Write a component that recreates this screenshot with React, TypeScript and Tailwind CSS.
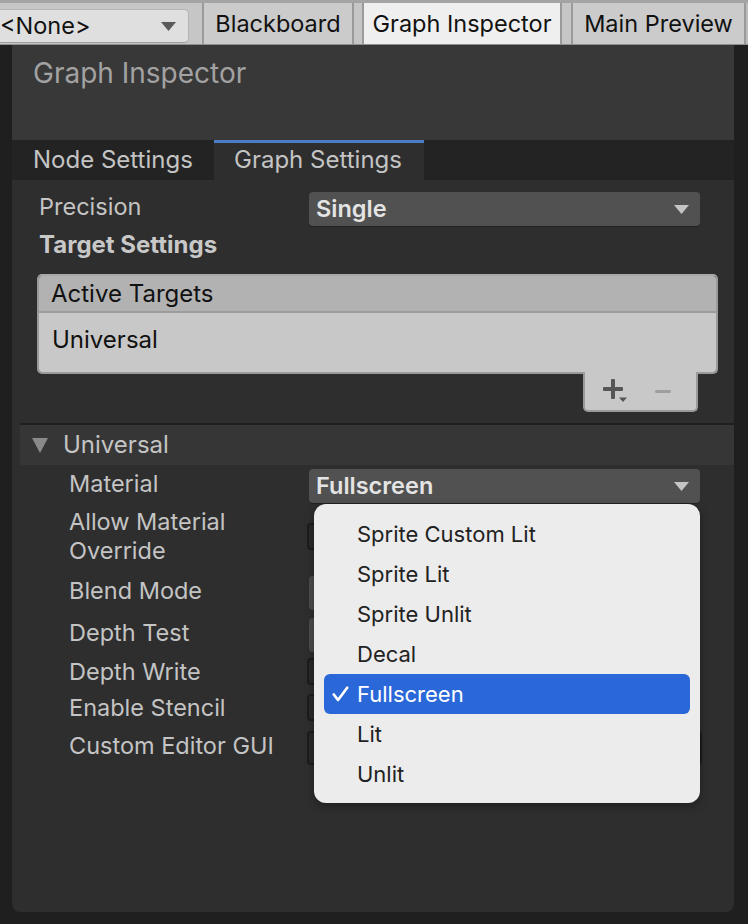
import React from "react";

const Arrow = ({ color = "#c4c4c4" }: { color?: string }) => (
  <svg width="15" height="9" viewBox="0 0 15 9">
    <polygon points="0,0 15,0 7.5,9" fill={color} />
  </svg>
);

const Dropdown = ({ text }: { text?: string }) => (
  <div className="flex h-[34px] w-[391px] items-center justify-between rounded-[4px] bg-[#515151] pl-[7px] pr-[11px] shadow-[0_1px_0_#222]">
    <span className="text-[23.5px] font-semibold leading-[30px] text-[#e4e4e4]">{text}</span>
    <Arrow />
  </div>
);

const Toggle = () => (
  <div className="h-[27px] w-[27px] rounded-[4px] border-2 border-[#1c1c1c] bg-[#2a2a2a]" />
);

const items = ["Sprite Custom Lit", "Sprite Lit", "Sprite Unlit", "Decal", "Fullscreen", "Lit", "Unlit"];

const label = "text-[23.5px] leading-[29px] text-[#c4c4c4]";

export default function App() {
  return (
    <div
      className="relative h-[924px] w-[748px] overflow-hidden bg-[#1f1f1f]"
      style={{ fontFamily: "Inter, 'Noto Sans', sans-serif" }}
    >
      {/* Top bar */}
      <div className="flex h-[45px] border-t-[3px] border-b border-[#a4a4a4] border-b-[#8f8f8f] bg-[#c6c6c6] text-[23.5px] leading-[30px] text-[#111]">
        <div className="flex w-[202px] items-end pb-[1px]">
          <div className="ml-[-12px] flex h-[34px] w-[201px] items-center justify-between rounded-[5px] border border-[#b4b4b4] border-b-[#9c9c9c] bg-[#dfdfdf] pl-[11px] pr-[12px]">
            <span>&lt;None&gt;</span>
            <Arrow color="#5a5a5a" />
          </div>
        </div>
        <div className="w-[2px] bg-[#9a9a9a]" />
        <div className="flex w-[148px] items-center justify-center bg-[#cbcbcb]">Blackboard</div>
        <div className="w-[2px] bg-[#9a9a9a]" />
        <div className="w-[8px] bg-[#c6c6c6]" />
        <div className="w-[2px] bg-[#9a9a9a]" />
        <div className="flex w-[196px] items-center justify-center bg-[#efefef]">Graph Inspector</div>
        <div className="w-[2px] bg-[#9a9a9a]" />
        <div className="w-[9px] bg-[#c6c6c6]" />
        <div className="w-[2px] bg-[#9a9a9a]" />
        <div className="flex w-[171px] items-center justify-center bg-[#cbcbcb]">Main Preview</div>
        <div className="w-[2px] bg-[#9a9a9a]" />
        <div className="flex-1 bg-[#bcbcbc]" />
      </div>

      {/* Panel */}
      <div className="ml-[12px] flex h-[867px] w-[722px] flex-col overflow-hidden rounded-b-[8px] bg-[#2e2e2e]">
        <div className="h-[95px] bg-[#383838] pl-[21px] pt-[12px] text-[28px] leading-[32px] text-[#a2a2a2]">Graph Inspector</div>
        <div className="flex h-[40px] bg-[#232323] text-[24px] leading-[30px] text-[#c4c4c4]">
          <div className="flex w-[202px] items-center pl-[21px]">Node Settings</div>
          <div className="flex w-[210px] items-center border-t-[3px] border-[#4b7cc6] bg-[#2e2e2e] pb-[3px] pl-[20px]">
            Graph Settings
          </div>
        </div>

        {/* content */}
        <div className="flex flex-col">
          <div className="mt-[12px] flex h-[34px] items-start">
            <div className={`w-[297px] pl-[27px] ${label}`}>Precision</div>
            <Dropdown text="Single" />
          </div>
          <div className="mt-[4px] h-[30px] pl-[27px] text-[24px] font-bold leading-[30px] text-[#c8c8c8]">Target Settings</div>

          {/* Active targets list */}
          <div className="ml-[25px] mt-[14px] w-[681px] overflow-hidden rounded-[5px] border-2 border-[#9a9a9a] border-t-[#a8a8a8]">
            <div className="flex h-[37px] items-center border-b-2 border-[#9c9c9c] bg-[#b2b2b2] pl-[12px] text-[24px] leading-[30px] text-[#111]">Active Targets</div>
            <div className="h-[59px] bg-[#c8c8c8] pl-[13px] pt-[12px] text-[24px] leading-[30px] text-[#111]">Universal</div>
          </div>
          <div className="ml-[571px] mt-[-2px] flex h-[40px] w-[115px] items-center rounded-b-[5px] border-2 border-t-0 border-[#9a9a9a] bg-[#c8c8c8] pl-[18px]">
            <svg width="28" height="24" viewBox="0 0 28 24">
              <rect x="0" y="8" width="20" height="4" rx="1" fill="#555" />
              <rect x="8" y="0" width="4" height="20" rx="1" fill="#555" />
              <polygon points="16,18.5 24,18.5 20,23" fill="#555" />
            </svg>
            <div className="ml-[24px] h-[3px] w-[16px] rounded bg-[#9e9e9e]" />
          </div>

          {/* Foldout */}
          <div className="ml-[8px] mt-[11px] h-[2px] bg-[#1f1f1f]" />
          <div className="ml-[8px] flex h-[40px] items-center bg-[#363636] pl-[12px]">
            <svg width="16" height="15" viewBox="0 0 16 15">
              <polygon points="0,0 16,0 8,15" fill="#8a8a8a" />
            </svg>
            <span className="ml-[15px] text-[24px] leading-[30px] text-[#c4c4c4]">Universal</span>
          </div>

          <div className="mt-[4px] flex h-[34px] items-start">
            <div className={`w-[297px] pl-[57px] ${label}`}>Material</div>
            <Dropdown text="Fullscreen" />
          </div>
          <div className="mt-[4px] flex h-[58px] items-center">
            <div className={`w-[295px] pl-[57px] ${label}`}>
              Allow Material
              <br />
              Override
            </div>
            <Toggle />
          </div>
          <div className="mt-[11px] flex h-[34px] items-start">
            <div className={`w-[297px] pl-[57px] ${label}`}>Blend Mode</div>
            <div className="h-[34px] w-[391px] rounded-[4px] bg-[#4c4c4c]" />
          </div>
          <div className="mt-[8px] flex h-[34px] items-start">
            <div className={`w-[297px] pl-[57px] ${label}`}>Depth Test</div>
            <div className="h-[34px] w-[391px] rounded-[4px] bg-[#4c4c4c]" />
          </div>
          <div className="mt-[2px] flex h-[34px] items-center">
            <div className={`w-[295px] pl-[57px] ${label}`}>Depth Write</div>
            <Toggle />
          </div>
          <div className="mt-[2px] flex h-[34px] items-center">
            <div className={`w-[295px] pl-[57px] ${label}`}>Enable Stencil</div>
            <Toggle />
          </div>
          <div className="mt-[7px] flex h-[34px] items-start">
            <div className={`w-[295px] pl-[57px] ${label}`}>Custom Editor GUI</div>
            <div className="h-[34px] w-[395px] rounded-[4px] border-2 border-[#1c1c1c] bg-[#2a2a2a]" />
          </div>
        </div>
      </div>

      {/* Popup menu */}
      <div className="absolute left-[314px] top-[504px] flex h-[299px] w-[386px] flex-col rounded-[12px] bg-[#ececec] px-[10px] pt-[10px] shadow-[0_3px_10px_rgba(0,0,0,0.35)]">
        {items.map((it) => {
          const sel = it === "Fullscreen";
          return (
            <div
              key={it}
              className={
                sel
                  ? "flex h-[40px] items-center rounded-[6px] bg-[#2a67d8] text-[22px] leading-[28px] text-white"
                  : "flex h-[40px] items-center rounded-[6px] text-[22px] leading-[28px] text-[#222]"
              }
            >
              <div className="flex w-[33px] justify-end pr-[8px]">
                {sel && (
                  <svg width="17" height="16" viewBox="0 0 17 16">
                    <polyline points="1.8,8.5 6,14 15.2,1.8" fill="none" stroke="white" strokeWidth="2.7" strokeLinecap="round" strokeLinejoin="round" />
                  </svg>
                )}
              </div>
              <span>{it}</span>
            </div>
          );
        })}
      </div>
    </div>
  );
}
